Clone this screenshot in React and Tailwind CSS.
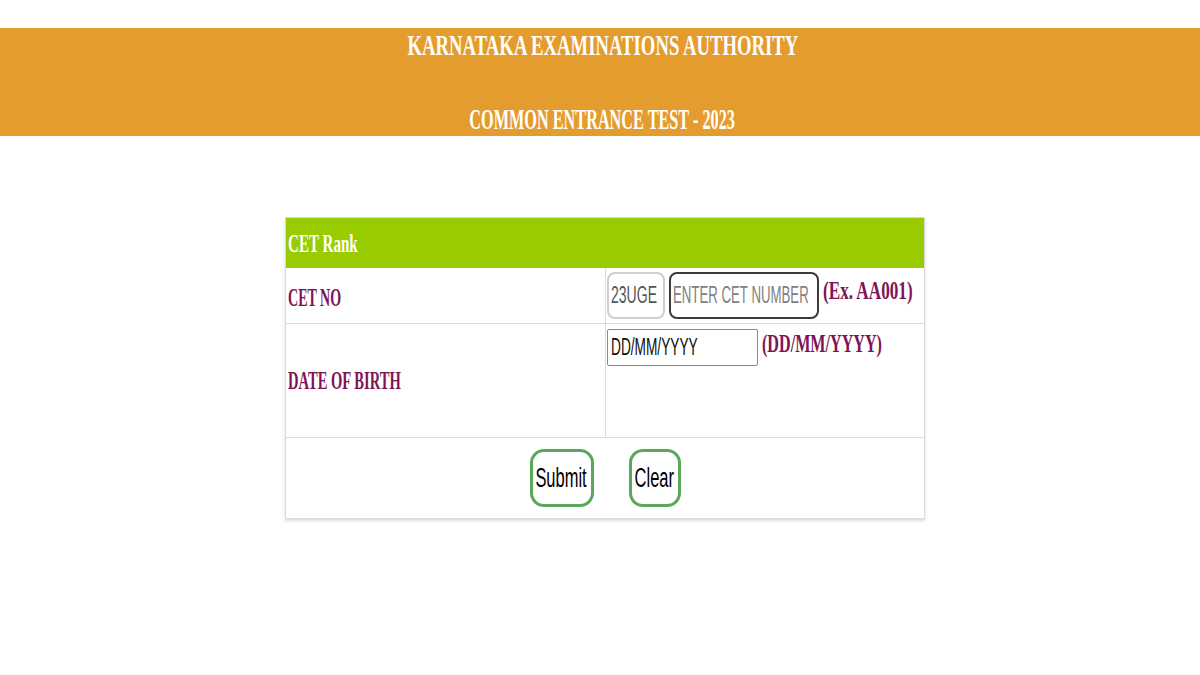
const serif = "font-['Liberation_Serif','Times_New_Roman',serif] font-bold"
const sans = "font-['Liberation_Sans',Arial,sans-serif]"

// the screenshot is squeezed sideways, so text spans get a horizontal scale
const Sq = ({ className = "", children }) => (
  <span className={`inline-block whitespace-nowrap ${className}`}>{children}</span>
)

const App = () => {
  return (
    <div className="min-h-[675px] w-[1200px] bg-white">
      {/* HEADER */}
      <div className="mt-[28px] flex h-[108px] flex-col items-center bg-[#E49C2F] pl-[5px] pt-[3px] text-white">
        <h1 className={`${serif} text-[29px] leading-[29px]`}>
          <Sq className="origin-center scale-x-[0.645]">KARNATAKA EXAMINATIONS AUTHORITY</Sq>
        </h1>
        <h2 className={`${serif} mt-[45px] text-[29px] leading-[29px]`}>
          <Sq className="origin-center scale-x-[0.56]">COMMON ENTRANCE TEST - 2023</Sq>
        </h2>
      </div>

      {/* FORM CARD */}
      <div className="ml-[285px] mt-[81px] w-[640px] border border-[#dcdcdc] shadow-[0_2px_3px_rgba(0,0,0,0.15)]">
        <div className={`${serif} flex h-[50px] items-center bg-[#99CC00] pl-[2px] pt-[2px] text-[26px] leading-[26px] text-white`}>
          <Sq className="origin-left scale-x-[0.58]">CET Rank</Sq>
        </div>

        {/* CET NO */}
        <div className="flex h-[56px] border-b border-[#dcdcdc]">
          <div className={`${serif} flex w-[319px] shrink-0 items-center pl-[2px] pt-[5px] text-[26px] leading-[26px] text-[#7E1456]`}>
            <Sq className="origin-left scale-x-[0.54]">CET NO</Sq>
          </div>
          <div className="flex min-w-0 flex-1 items-center gap-[4px] border-l border-[#dcdcdc] pl-[1px]">
            <div className={`${sans} flex h-[47px] w-[58px] shrink-0 items-center rounded-[8px] border-2 border-[#cfcfcf] pl-[2px] text-[23px] text-[#555]`}>
              <Sq className="origin-left scale-x-[0.61]">23UGE</Sq>
            </div>
            <div className={`${sans} flex h-[47px] w-[150px] shrink-0 items-center rounded-[8px] border-[2.5px] border-[#3a3a3a] pl-[2px] text-[23px] text-[#808080]`}>
              <Sq className="origin-left scale-x-[0.575]">ENTER CET NUMBER</Sq>
            </div>
            <div className={`${serif} mb-[10px] shrink-0 text-[26px] leading-[26px] text-[#7E1456]`}>
              <Sq className="origin-left scale-x-[0.66]">(Ex. AA001)</Sq>
            </div>
          </div>
        </div>

        {/* DATE OF BIRTH */}
        <div className="flex h-[114px] border-b border-[#dcdcdc]">
          <div className={`${serif} flex w-[319px] shrink-0 items-center pl-[2px] text-[26px] leading-[26px] text-[#7E1456]`}>
            <Sq className="origin-left scale-x-[0.56]">DATE OF BIRTH</Sq>
          </div>
          <div className="flex min-w-0 flex-1 items-start gap-[4px] border-l border-[#dcdcdc] pl-[1px] pt-[5px]">
            <div className={`${sans} flex h-[37px] w-[151px] shrink-0 items-center rounded-[2px] border border-[#8a8a8a] pl-[3px] text-[23px] text-[#111]`}>
              <Sq className="origin-left scale-x-[0.595]">DD/MM/YYYY</Sq>
            </div>
            <div className={`${serif} shrink-0 pt-[2px] text-[26px] leading-[26px] text-[#7E1456]`}>
              <Sq className="origin-left scale-x-[0.62]">(DD/MM/YYYY)</Sq>
            </div>
          </div>
        </div>

        {/* ACTIONS */}
        <div className="flex h-[80px] items-start justify-center gap-[35px] pt-[11px]">
          <button className={`${sans} flex h-[58px] w-[64px] items-center justify-center rounded-[14px] border-[3px] border-[#5BA75B] bg-white text-[27px] text-black`}>
            <Sq className="origin-center scale-x-[0.61]">Submit</Sq>
          </button>
          <button className={`${sans} flex h-[58px] w-[52px] items-center justify-center rounded-[14px] border-[3px] border-[#5BA75B] bg-white text-[27px] text-black`}>
            <Sq className="origin-center scale-x-[0.61]">Clear</Sq>
          </button>
        </div>
      </div>
    </div>
  )
}

export default App
